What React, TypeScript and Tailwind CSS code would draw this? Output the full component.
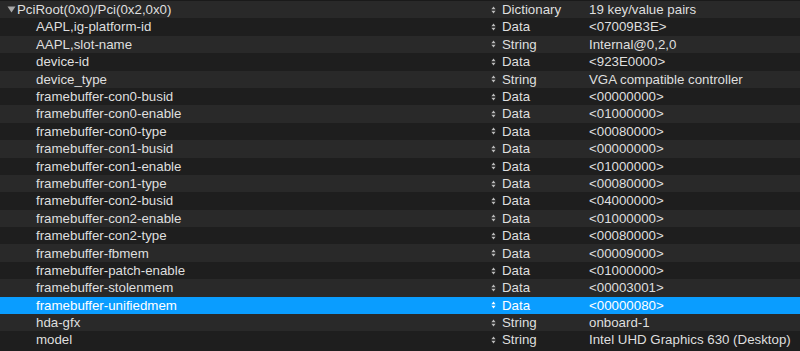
import React from "react";

const rows: [string, string, string][] = [
  ["AAPL,ig-platform-id", "Data", "<07009B3E>"],
  ["AAPL,slot-name", "String", "Internal@0,2,0"],
  ["device-id", "Data", "<923E0000>"],
  ["device_type", "String", "VGA compatible controller"],
  ["framebuffer-con0-busid", "Data", "<00000000>"],
  ["framebuffer-con0-enable", "Data", "<01000000>"],
  ["framebuffer-con0-type", "Data", "<00080000>"],
  ["framebuffer-con1-busid", "Data", "<00000000>"],
  ["framebuffer-con1-enable", "Data", "<01000000>"],
  ["framebuffer-con1-type", "Data", "<00080000>"],
  ["framebuffer-con2-busid", "Data", "<04000000>"],
  ["framebuffer-con2-enable", "Data", "<01000000>"],
  ["framebuffer-con2-type", "Data", "<00080000>"],
  ["framebuffer-fbmem", "Data", "<00009000>"],
  ["framebuffer-patch-enable", "Data", "<01000000>"],
  ["framebuffer-stolenmem", "Data", "<00003001>"],
  ["framebuffer-unifiedmem", "Data", "<00000080>"],
  ["hda-gfx", "String", "onboard-1"],
  ["model", "String", "Intel UHD Graphics 630 (Desktop)"],
];

function Stepper({ selected }: { selected: boolean }) {
  return (
    <svg width="5" height="8" viewBox="0 0 5 8" className="shrink-0">
      <path d="M2.5 0.5 L4.6 3.2 L0.4 3.2 Z" fill={selected ? "#ffffff" : "#bdbdbd"} />
      <path d="M2.5 7.5 L4.6 4.8 L0.4 4.8 Z" fill={selected ? "#ffffff" : "#bdbdbd"} />
    </svg>
  );
}

function Row({
  keyName,
  type,
  value,
  index,
  selected,
  root,
}: {
  keyName: string;
  type: string;
  value: string;
  index: number;
  selected?: boolean;
  root?: boolean;
}) {
  const bg = selected ? "bg-[#0a9dff]" : index % 2 === 0 ? "bg-[#292929]" : "bg-[#1e1e1e]";
  const text = selected ? "text-white" : "text-[#dfdfdf]";
  return (
    <div className={`flex items-center h-[17.4px] ${bg} ${text}`}>
      <div className={`flex items-center w-[491px] shrink-0 ${root ? "pl-[7px]" : "pl-[36px]"}`}>
        {root && (
          <svg width="9" height="7" viewBox="0 0 9 7" className="mr-[1px] shrink-0">
            <path d="M0.5 0.5 L8.5 0.5 L4.5 6.5 Z" fill="#a8a8a8" />
          </svg>
        )}
        <span className="whitespace-nowrap">{keyName}</span>
      </div>
      <div className="flex items-center w-[97px] shrink-0 gap-[6px]">
        <Stepper selected={!!selected} />
        <span className="whitespace-nowrap">{type}</span>
      </div>
      <div className="whitespace-nowrap pl-[1px]">{value}</div>
    </div>
  );
}

export default function App() {
  return (
    <div
      className="w-[800px] h-[351px] bg-[#1e1e1e] overflow-hidden text-[13.3px] leading-none"
      style={{ fontFamily: "'Liberation Sans', Arial, sans-serif" }}
    >
      <div className="h-[1px] bg-[#1a1a1a]" />
      <Row keyName="PciRoot(0x0)/Pci(0x2,0x0)" type="Dictionary" value="19 key/value pairs" index={0} root />
      {rows.map((r, i) => (
        <Row
          key={r[0]}
          keyName={r[0]}
          type={r[1]}
          value={r[2]}
          index={i + 1}
          selected={r[0] === "framebuffer-unifiedmem"}
        />
      ))}
    </div>
  );
}
